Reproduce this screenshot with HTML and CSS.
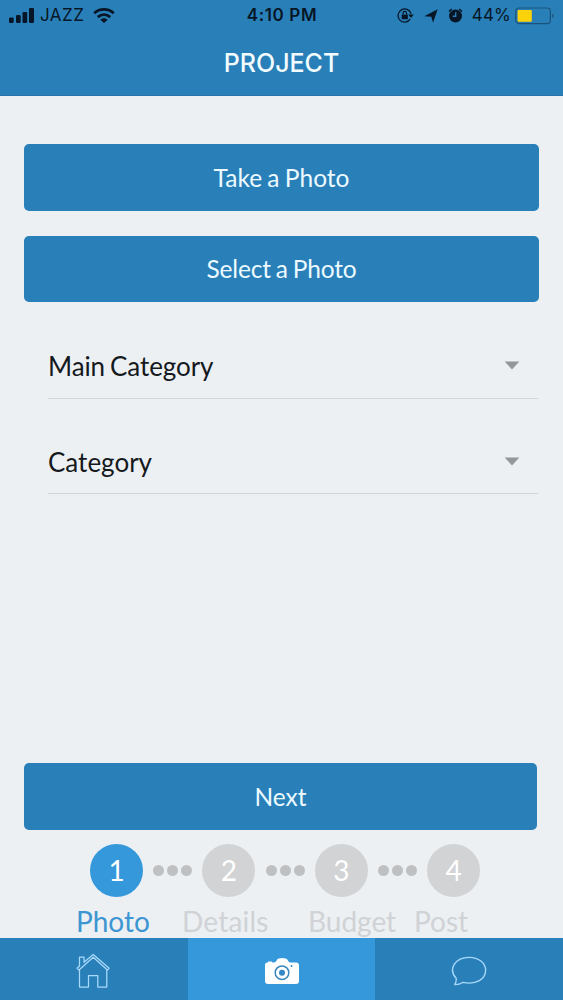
FILE: index.html
```html
<!DOCTYPE html>
<html lang="en">
<head>
<meta charset="utf-8">
<title>Project</title>
<link rel="stylesheet" href="styles.css">
</head>
<body>
<div class="screen">
  <header class="header">
    <div class="status">
      <div class="status-left">
        <svg class="signal" width="26" height="16" viewBox="0 0 26 16"><rect x="0" y="9.500" width="4.700" height="5.500" rx="1.200"/><rect x="7" y="7" width="4.700" height="8" rx="1.200"/><rect x="13.500" y="4" width="4.700" height="11" rx="1.200"/><rect x="20" y="0" width="5" height="15" rx="1.200"/></svg>
        <span class="carrier">JAZZ</span>
        <svg class="wifi" width="22" height="16" viewBox="0 0 22 16"><g fill="none" stroke="#071626" stroke-width="2.8"><path d="M1.2 5.200C6.800.2 15.200.2 20.800 5.200"/><path d="M4.800 9.100C8.400 5.900 13.600 5.900 17.200 9.100"/></g><path d="M7.300 11.700Q11 8.800 14.700 11.700L11 15Z"/></svg>
      </div>
      <span class="time">4:10 PM</span>
      <div class="status-right">
        <svg width="17" height="16" viewBox="0 0 17 16"><path d="M13.2 11.2A6.600 6.600 0 1 1 14 5.700" fill="none" stroke="#071626" stroke-width="1.300"/><path d="M11.300 6.500H16.800L14 9.900Z"/><rect x="4.700" y="6.500" width="6.200" height="4.700" rx=".7"/><path d="M6 6.500V5.200a1.800 1.800 0 0 1 3.600 0V6.500" fill="none" stroke="#071626" stroke-width="1.200"/></svg>
        <svg class="arrow" width="14" height="14" viewBox="0 0 14 14"><path d="M13.700.3 9 13.700 7.300 7.700.3 7.200Z"/></svg>
        <svg class="alarm" width="15" height="15" viewBox="0 0 15 15"><circle cx="7.500" cy="8" r="6.500"/><path d="M1 3.600 3.800 1M14 3.600 11.200 1" stroke="#071626" stroke-width="1.500" fill="none"/><path d="M7.700 4.300V8.300H4.800" fill="none" stroke="#2980b9" stroke-width="1.400"/></svg>
        <span class="percent">44%</span>
        <svg class="battery" width="40" height="18" viewBox="0 0 40 18"><rect x=".8" y="1" width="34.600" height="15.600" rx="3.200" fill="none" stroke="#1b5279" stroke-width="1.200"/><rect x="2.600" y="3" width="14.200" height="11.800" rx="1" fill="#fcd20b"/><path d="M37.200 6.500q3 2.300 0 4.600Z" fill="#1b5279"/></svg>
      </div>
    </div>
    <h1 class="title">PROJECT</h1>
  </header>
  <main class="content">
    <button class="btn">Take a Photo</button>
    <button class="btn btn-select">Select a Photo</button>
    <div class="field"><span class="main-label">Main Category</span><svg width="16" height="9" viewBox="0 0 16 9"><path d="M.7.5H15.3L8 8.5Z"/></svg></div>
    <div class="field field-second"><span>Category</span><svg width="16" height="9" viewBox="0 0 16 9"><path d="M.7.5H15.3L8 8.5Z"/></svg></div>
    <button class="btn btn-next">Next</button>
    <div class="steps">
      <span class="step active">1</span>
      <span class="dots"><i></i><i></i><i></i></span>
      <span class="step">2</span>
      <span class="dots"><i></i><i></i><i></i></span>
      <span class="step">3</span>
      <span class="dots"><i></i><i></i><i></i></span>
      <span class="step">4</span>
    </div>
    <div class="labels"><span class="current">Photo</span><span class="details">Details</span><span>Budget</span><span>Post</span></div>
  </main>
  <nav class="tabs">
    <a class="tab tab-home"><svg width="34" height="36" viewBox="0 0 34 36"><path d="M1 15.300 3 17 17.200 4.300 31.400 17 33.100 15.300 17.200 1.500 8 9.300V4H3.500V13ZM3.500 16.700V34H12.500V22.500H21.800V34H30.800V16.700" fill="none" stroke="#a9d9fb" stroke-width="1.250" stroke-linejoin="round"/></svg></a>
    <a class="tab selected"><svg width="36" height="28" viewBox="0 0 36 28"><path d="M3.500 5.500 4.500 4.400H7.500L8.500 5.500H10.500Q12.300 5 13 2.800Q14 1 18.200 1T23.500 2.800Q24.200 5 26 5.500H32Q35 5.500 35 8.500V24Q35 27 32 27H4Q1 27 1 24V8Q1 5.500 3.500 5.500Z" fill="#fff"/><circle cx="18" cy="15.700" r="6.800" fill="none" stroke="#3987bd" stroke-width="1.500"/><circle cx="18" cy="15.700" r="3" fill="#3487c4"/><circle cx="27.500" cy="9" r="1" fill="#3b87bc"/></svg></a>
    <a class="tab"><svg width="36" height="30" viewBox="0 0 36 30"><path d="M5.200 22.200C-3.200 13.300 4 1.300 18.200 1.300C27.500 1.300 34.600 6.700 34.600 14.300C34.600 23 25.500 29.200 12 26.300C9.600 28 6.500 28.700 3.700 28.700C5 26.700 5.500 24.500 5.200 22.200Z" fill="none" stroke="#a9d9fb" stroke-width="1.300" stroke-linejoin="round"/></svg></a>
  </nav>
</div>
</body>
</html>
```
FILE: styles.css
```css
* { box-sizing: border-box; }
body { margin: 0; }
.screen { width: 563px; height: 1000px; display: flex; flex-direction: column; background: #ecf0f3; font-family: Lato, sans-serif; overflow: hidden; }
.header { height: 96px; background: #2980b9; border-bottom: 1px solid #2874a8; }
.status { height: 31px; padding: 0 8px 0 9px; display: grid; grid-template-columns: 1fr auto 1fr; align-items: center; color: #071626; font-family: Inter, sans-serif; font-size: 17px; line-height: 31px; }
.status svg { fill: #071626; }
.status-left, .status-right { display: flex; align-items: center; }
.status-right { justify-content: flex-end; }
.carrier { margin-left: 5px; letter-spacing: 0.5px; }
.wifi { margin-left: 9px; }
.time { font-weight: 600; letter-spacing: 0.65px; }
.arrow { margin-left: 10px; }
.alarm { margin-left: 10px; }
.percent { margin-left: 9px; letter-spacing: 0.2px; }
.battery { margin-left: 4px; }
.title { margin: 15px 0 0; text-align: center; color: #f2fcff; font-family: Inter, sans-serif; font-size: 25px; font-weight: 500; line-height: 34px; }
.content { height: 842px; padding: 48px 24px 0; display: flex; flex-direction: column; flex: none; }
.btn { width: 515px; height: 67px; flex: none; border: 0; border-radius: 5px; padding: 0; background: #2980b9; color: #ecfaff; font-family: Lato, sans-serif; font-size: 24.5px; word-spacing: -1px; }
.btn-select { margin-top: 25px; height: 66px; padding-bottom: 2px; letter-spacing: -0.2px; }
.field { height: 66px; flex: none; margin: 31px 0 0 24px; padding: 0 18px 0 0; width: 490px; border-bottom: 1px solid #d2d5d8; display: flex; align-items: center; justify-content: space-between; font-size: 26px; color: #15191d; }
.field svg { fill: #949698; }
.main-label { letter-spacing: -0.1px; word-spacing: -1.5px; }
.field-second { margin-top: 29px; padding-top: 2px; }
.btn-next { width: 513px; margin-top: 269px; }
.steps { display: flex; align-items: center; margin: 14px 0 0 66px; height: 53px; flex: none; }
.step { width: 53px; height: 53px; border-radius: 50%; background: #d2d3d5; color: #fff; display: flex; align-items: center; justify-content: center; font-size: 28px; padding-bottom: 2px; }
.active { background: #3498db; }
.dots { width: 59.4px; display: flex; justify-content: center; gap: 3px; }
.dots i { width: 11px; height: 11px; border-radius: 50%; background: #bfc0c1; }
.labels { display: grid; grid-template-columns: 106px 126px 106px auto; margin: 7px 0 0 52px; font-size: 28px; line-height: 34px; color: #d0d2d5; }
.current { color: #3d95d1; }
.details { letter-spacing: 0.2px; }
.tabs { height: 62px; display: grid; grid-template-columns: 188px 187px 188px; background: #2980b9; }
.tab { display: flex; align-items: center; justify-content: center; padding-top: 4px; }
.tab-home { padding-right: 2px; }
.selected { background: #3498db; }
```
